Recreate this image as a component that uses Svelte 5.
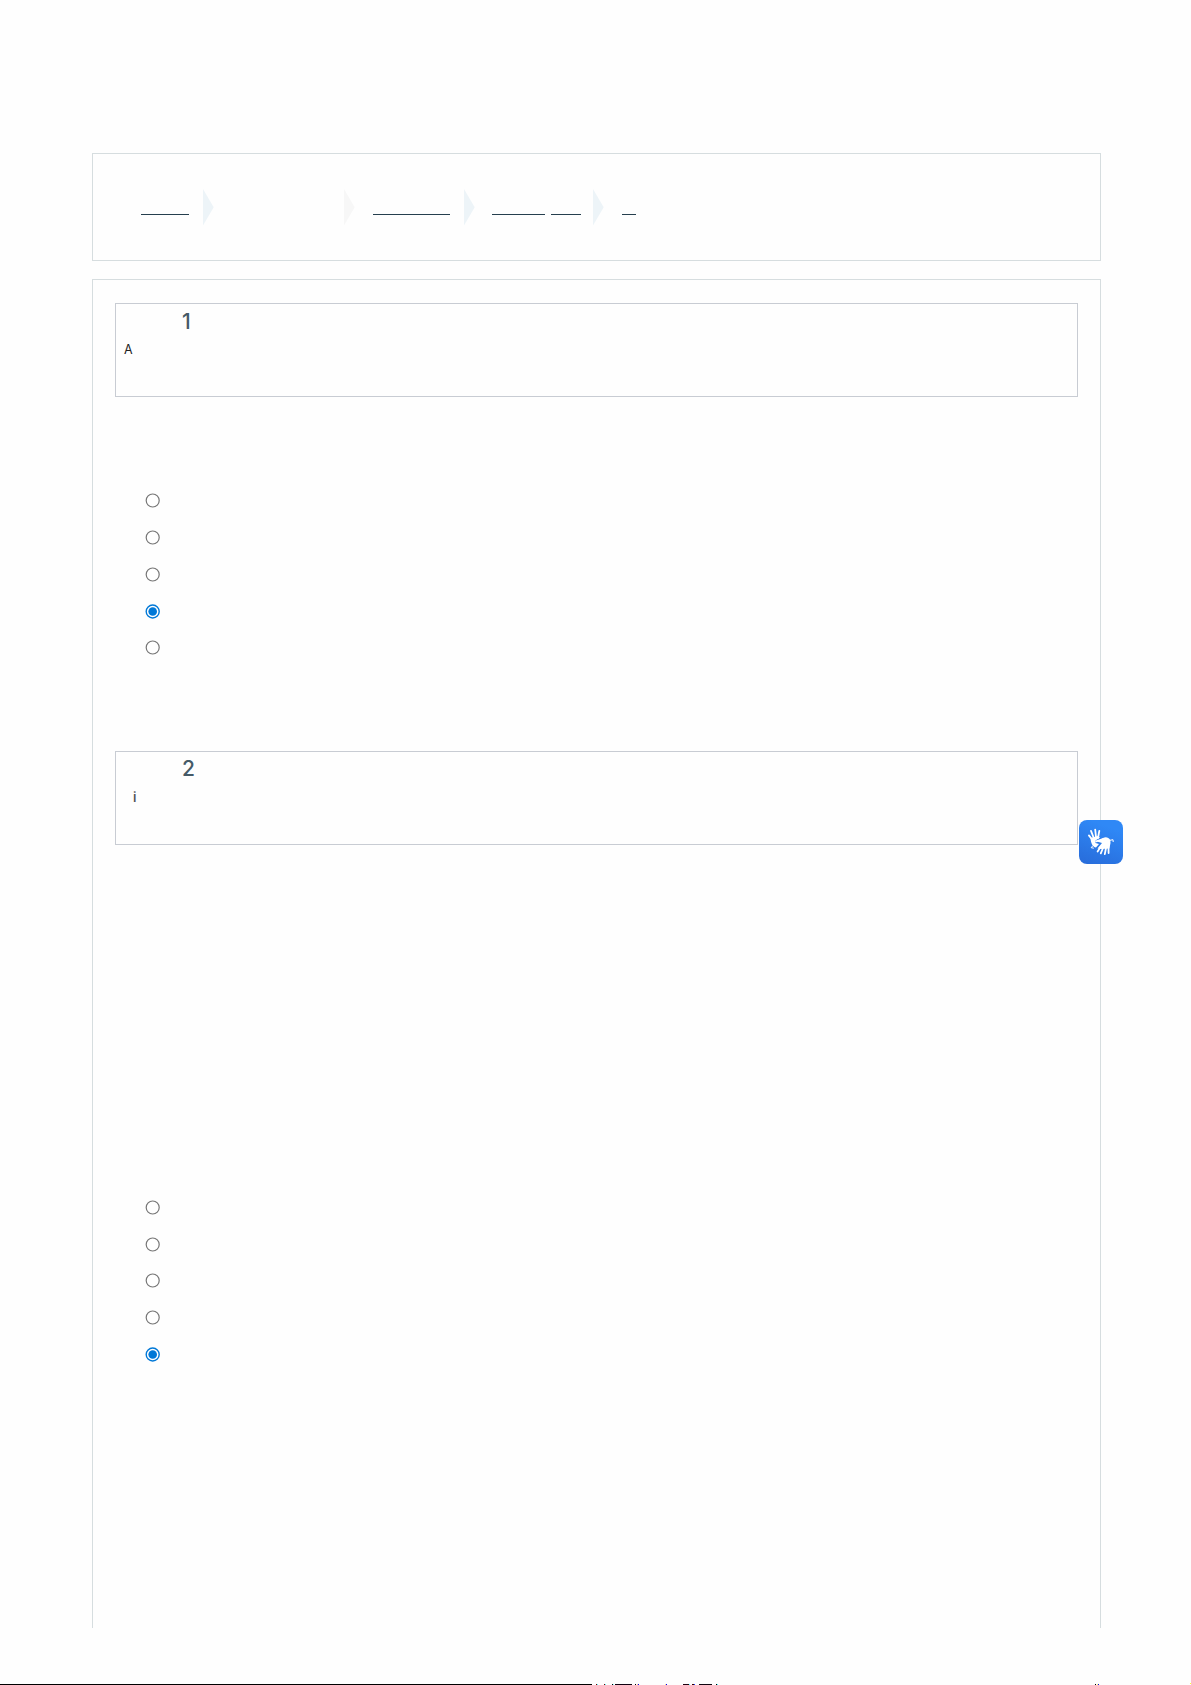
<script lang="ts">
  const crumbs = [
    { words: [48], gap: 14, arrow: "blue", after: 130 },
    { words: [], gap: 0, arrow: "gray", after: 18 },
    { words: [77], gap: 14, arrow: "blue", after: 17 },
    { words: [53, 30], gap: 12, arrow: "blue", after: 18 },
    { words: [14], gap: 0, arrow: "", after: 0 },
  ];

  let questions = $state([
    { id: 1, initial: "A", name: "q1", answer: 3 },
    { id: 2, initial: "i", name: "q2", answer: 4 },
  ]);

  const options = [0, 1, 2, 3, 4];

  // dark fragments on the last line: [offset, width, color]
  const marks: [number, number, string][] = [
    [0, 592, "#000"],
    [596, 1, "#700"],
    [597, 1, "#5ff"],
    [604, 1, "#700"],
    [605, 1, "#5ff"],
    [612, 1, "#000"],
    [613, 1, "#8ff"],
    [615, 17, "#100010"],
    [635, 1, "#000"],
    [637, 1, "#fb8"],
    [638, 1, "#00f"],
    [665, 1, "#fd8"],
    [666, 1, "#00f"],
    [683, 6, "#200010"],
    [689, 1, "#6ff"],
    [692, 2, "#300"],
    [694, 1, "#24f"],
    [699, 13, "#100510"],
    [716, 1, "#000"],
    [717, 1, "#5ff"],
    [1095, 1, "#000"],
    [1097, 1, "#ff5"],
    [1098, 1, "#00f"],
  ];
</script>

<main class="page">
  <nav class="panel breadcrumb">
    {#each crumbs as crumb}
      {#each crumb.words as width}
        <a class="crumb_link" href="#top" aria-label="link" style="width: {width}px"></a>
      {/each}
      {#if crumb.arrow}
        <svg
          class="crumb_arrow {crumb.arrow}"
          style="margin-left: {crumb.gap}px; margin-right: {crumb.after}px"
          viewBox="0 0 11 37"
        >
          <path d="M0 0 L10.7 18.2 L0 36.4 Z" />
        </svg>
      {/if}
    {/each}
  </nav>

  <section class="panel quiz">
    {#each questions as question (question.id)}
      <div class="question">
        <div class="question_header">
          <h3>{question.id}</h3>
          <p>{question.initial}</p>
        </div>
        <div class="options">
          {#each options as option}
            <label class="option">
              <input type="radio" name={question.name} value={option} bind:group={question.answer} />
              <svg viewBox="0 0 15 15">
                <circle class="ring" cx="7.7" cy="7.5" r="6.5" />
                {#if question.answer === option}
                  <circle class="dot" cx="7.7" cy="7.5" r="4.3" />
                {/if}
              </svg>
            </label>
          {/each}
        </div>
      </div>
    {/each}
  </section>

  <svg class="strip" viewBox="0 0 1191 2" shape-rendering="crispEdges">
    {#each marks as [x, width, fill]}
      <rect {x} y="1" {width} height="1" {fill} />
    {/each}
    <rect x="1190" y="0" width="1" height="1" fill="#ff3" />
  </svg>

  <button class="sign_button" aria-label="Libras">
    <svg viewBox="0 0 44 44">
      <g class="hand_lines">
        <path d="M13.5 20 L9.9 15.4" />
        <path d="M14.8 18 L12 10.9" />
        <path d="M17 17 L16.2 9.6" />
        <path d="M19 18 L20.3 10.8" />
        <path d="M21.5 27 L18.6 31.6" />
        <path d="M24 28 L21.8 33.4" />
        <path d="M27 28 L25.8 34.2" />
        <path d="M29.5 26 L29.6 33" />
        <path d="M17.2 21.3 L24 19" />
      </g>
      <path class="hand" d="M11.5 18 L18.5 16 L21 17.5 L16.5 20.5 L16.5 23 L20 24 L17 27.5 C13.5 27 11.8 23 11.5 18 Z" />
      <path class="hand" d="M18 21.5 L24 18 C27 16.5 29.5 17.5 31.3 20 L31.5 23 L30.4 28.5 L22 29 L18.5 28.5 L23 23 Z" />
      <path class="wrist" d="M31 20.3 L34 19.7 L34.2 22 M14 25.5 L12.2 27.7 L14.8 28.2" />
    </svg>
  </button>
</main>

<style>
  :global(body) {
    margin: 0;
    background: #fefefe;
  }
  .page {
    box-sizing: border-box;
    position: relative;
    width: 1191px;
    height: 1685px;
    padding: 153px 90px 0 92px;
    overflow: hidden;
    font-family: Inter, "Liberation Sans", sans-serif;
  }
  .panel {
    box-sizing: border-box;
    border: 1px solid #d6dddf;
  }
  .breadcrumb {
    display: flex;
    height: 108px;
    padding: 35px 48px;
  }
  .crumb_link {
    height: 25px;
    border-bottom: 1px solid #263f4e;
  }
  .crumb_link + .crumb_link {
    margin-left: 6px;
  }
  .crumb_arrow {
    flex: none;
    width: 11px;
    height: 37px;
  }
  .crumb_arrow.blue {
    fill: #edf4f8;
  }
  .crumb_arrow.gray {
    fill: #f7f7f7;
  }
  .quiz {
    height: 1349px;
    margin-top: 18px;
    padding: 23px 22px 0;
    border-bottom: none;
  }
  .question {
    height: 448px;
  }
  .question_header {
    box-sizing: border-box;
    height: 94px;
    padding: 6px 8px;
    border: 1px solid #c8ccd3;
  }
  .question:nth-child(2) .question_header {
    padding-top: 5px;
  }
  h3 {
    margin: 0 0 0 58px;
    color: #455a67;
    font-size: 21px;
    font-weight: 500;
    line-height: 24px;
  }
  p {
    margin: 6px 0 0;
    color: #222;
    font-size: 12.5px;
    line-height: 20px;
  }
  .question:nth-child(2) p {
    margin-left: 9px;
    color: #555;
    font-size: 13px;
    font-weight: 600;
  }
  .options {
    padding: 85.5px 0 0 30px;
  }
  .question:nth-child(2) .options {
    padding-top: 344.1px;
  }
  .option {
    display: flex;
    align-items: center;
    height: 36.75px;
  }
  .option input {
    position: absolute;
    opacity: 0;
  }
  .option svg {
    width: 15px;
    height: 15px;
  }
  .ring {
    fill: #fff;
    stroke: #767676;
    stroke-width: 1.2;
  }
  .option input:checked + svg .ring {
    stroke: #0078d7;
    stroke-width: 1.4;
  }
  .dot {
    fill: #0078d7;
  }
  .strip {
    position: absolute;
    bottom: 0;
    left: 0;
    width: 1191px;
    height: 2px;
  }
  .sign_button {
    position: absolute;
    top: 820px;
    left: 1078.5px;
    width: 44px;
    height: 44px;
    padding: 0;
    border: none;
    border-radius: 8px;
    background: linear-gradient(200deg, #2f88f6 20%, #286ddb 95%);
  }
  .sign_button svg {
    display: block;
    width: 44px;
    height: 44px;
  }
  .hand {
    fill: #fff;
  }
  .hand_lines {
    stroke: #fff;
    stroke-width: 1.8;
    stroke-linecap: round;
  }
  .wrist {
    fill: none;
    stroke: #fff;
  }
</style>
